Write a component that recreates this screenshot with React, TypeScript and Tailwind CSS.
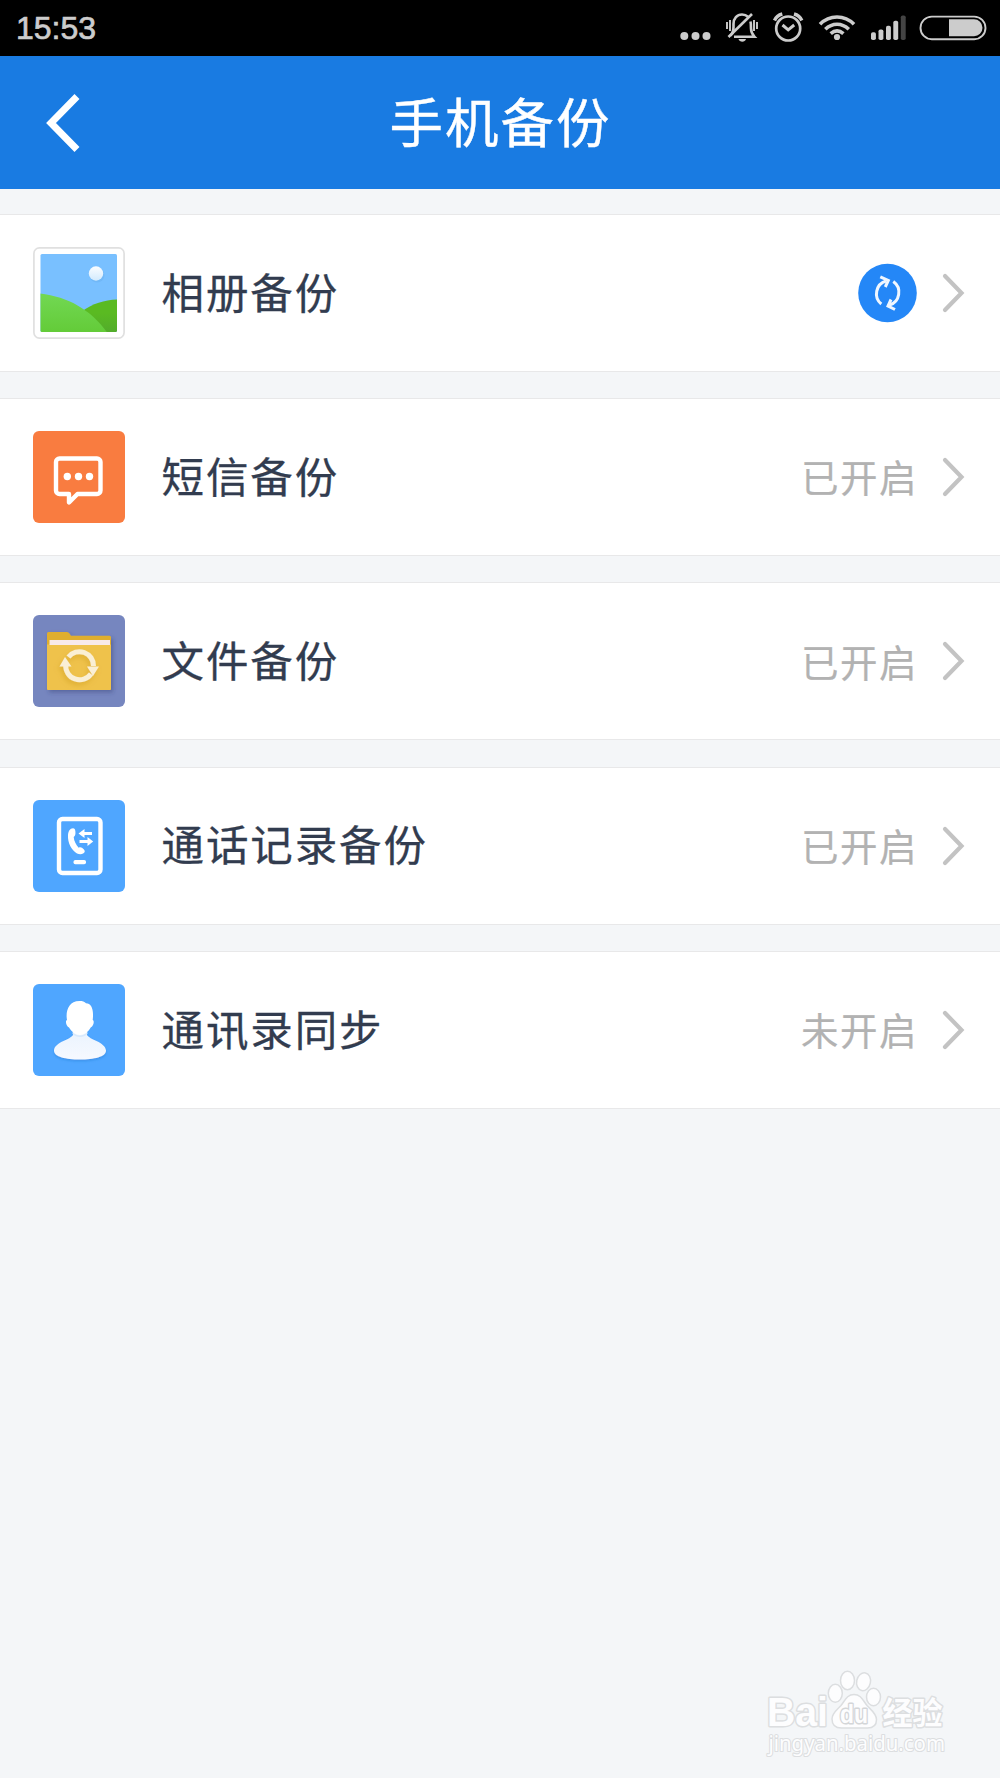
import React from 'react';

const StatusIcons = () => (
  <svg className="w-[320px] h-[56px]" viewBox="680 0 320 56" fill="none" stroke="#cccccc">
    {/* more */}
    <g fill="#cccccc" stroke="none">
      <circle cx="684.3" cy="36" r="4" />
      <circle cx="695.5" cy="36" r="4" />
      <circle cx="706.5" cy="36" r="4" />
    </g>

    {/* muted bell */}
    <g strokeWidth="2.600">
      <path d="M730.500 35.500c3-2.500 3-5 3-9v-2.500c0-5.500 3.500-9.500 8.500-9.500 2.500 0 4.500 .8 6 2.200" />
      <path d="M750.500 21.500c.5 2 .5 4 .5 7 0 3.500 1 5.500 3.500 8.300H734" />
      <path d="M728.500 37L752 14" />
      <path d="M730 20v11M727 22v7M754 20v11M757 22v7" strokeWidth="1.900" />
      <path d="M738.500 39h7.500c-.5 2-2 2.700-3.700 2.700s-3.300-.7-3.800-2.700z" fill="#cccccc" stroke="none" />
    </g>

    {/* alarm */}
    <g strokeWidth="2.700">
      <circle cx="788.200" cy="28.500" r="12" />
      <path d="M782.500 25l5.700 4.800 6-4.800" strokeWidth="3" />
      <path d="M774.500 20.500c1.500-3.500 4-5.500 7.800-6.500M801.800 20.500c-1.500-3.500-4-5.500-7.800-6.500" strokeWidth="3.400" />
    </g>

    {/* wifi */}
    <g strokeWidth="3.600">
      <path d="M820 24.300c9.500-9.700 24.500-9.700 34 0" />
      <path d="M825.300 29.300c7-6.700 16.500-6.700 23.500 0" />
      <path d="M830.700 33.700c4-3.600 8.700-3.600 12.700 0" />
      <circle cx="837" cy="37" r="3.100" fill="#cccccc" stroke="none" />
    </g>

    {/* signal */}
    <g fill="#cccccc" stroke="none">
      <rect x="871" y="32.300" width="4.900" height="7.700" rx="1.800" />
      <rect x="878.500" y="29.500" width="4.900" height="10.500" rx="1.800" />
      <rect x="886" y="25.700" width="4.900" height="14.300" rx="1.800" />
      <rect x="893.300" y="20.800" width="4.900" height="19.200" rx="1.800" />
      <rect x="900.800" y="15.500" width="4.900" height="24.500" rx="1.800" fill="#444444" />
    </g>

    {/* battery */}
    <rect x="920.500" y="16.600" width="65" height="22.600" rx="11.300" strokeWidth="1.900" />
    <path d="M949 19.300h25a8.500 8.500 0 0 1 0 17h-25z" fill="#cccccc" stroke="none" />
  </svg>
);

const AlbumIcon = () => (
  <svg className="w-[92px] h-[92px]" viewBox="0 0 92 92">
    <defs>
      <linearGradient id="hill" x1="0" y1="0" x2="0" y2="1">
        <stop offset="0" stopColor="#72d853" />
        <stop offset="1" stopColor="#63cb38" />
      </linearGradient>
      <linearGradient id="backHill" x1="0" y1="0" x2="0" y2="1">
        <stop offset="0.4" stopColor="#5aba22" />
        <stop offset="1" stopColor="#52ab2c" />
      </linearGradient>
      <linearGradient id="sun" x1="0" y1="0" x2="0" y2="1">
        <stop offset="0" stopColor="#fbfdff" />
        <stop offset="1" stopColor="#d2eafd" />
      </linearGradient>
      <clipPath id="photo">
        <rect x="7.500" y="7" width="76.500" height="78" rx="1.500" />
      </clipPath>
    </defs>
    <rect x="0.900" y="0.900" width="90.200" height="90.200" rx="5.500" fill="#fff" stroke="#e0e0e0" strokeWidth="1.700" />
    <g clipPath="url(#photo)">
      <rect x="7" y="6" width="78" height="80" fill="#79c0ff" />
      <circle cx="64" cy="28" r="7.500" fill="#6cb2f2" opacity="0.6" />
      <circle cx="63" cy="26.500" r="7.200" fill="url(#sun)" />
      <path d="M48 65C60 56 72 53 85 52.500V86H48z" fill="url(#backHill)" />
      <path d="M7 46.500C36 50 58 63 74.500 86H7z" fill="url(#hill)" />
    </g>
  </svg>
);

const SmsIcon = () => (
  <svg className="w-[92px] h-[92px]" viewBox="0 0 92 92">
    <rect width="92" height="92" rx="6" fill="#f97c40" />
    <path
      d="M26.500 27.500h37.500a3.500 3.500 0 0 1 3.500 3.500v28.500a3.500 3.500 0 0 1-3.500 3.500H44.500L36 71.500V63h-9.500a3.500 3.500 0 0 1-3.500-3.500V31a3.500 3.500 0 0 1 3.500-3.500z"
      fill="none"
      stroke="#fff"
      strokeWidth="4.400"
      strokeLinejoin="round"
    />
    <g fill="#fff">
      <circle cx="34.300" cy="45.500" r="3.700" />
      <circle cx="45.500" cy="45.500" r="3.700" />
      <circle cx="56.500" cy="45.500" r="3.700" />
    </g>
  </svg>
);

const FileIcon = () => (
  <svg className="w-[92px] h-[92px]" viewBox="0 0 92 92">
    <defs>
      <filter id="folderShadow" x="-20%" y="-20%" width="150%" height="150%">
        <feDropShadow dx="2" dy="2.500" stdDeviation="2" floodColor="#303a70" floodOpacity="0.4" />
      </filter>
      <filter id="arrowShadow" x="-20%" y="-20%" width="150%" height="150%">
        <feDropShadow dx="-1.500" dy="3" stdDeviation="2.500" floodColor="#b98410" floodOpacity="0.3" />
      </filter>
    </defs>
    <rect width="92" height="92" rx="6" fill="#7686bf" />
    <g filter="url(#folderShadow)">
      <path d="M14 18.500q0-1.500 1.500-1.500H34q1.500 0 2.500 1.500l1.500 2.300h38.500q1.500 0 1.500 1.500V73.500q0 1.500-1.500 1.500h-61q-1.500 0-1.500-1.500z" fill="#dfae2d" />
      <path d="M14 29.500h64V73.500q0 1.500-1.500 1.500h-61q-1.500 0-1.500-1.500z" fill="#efc24b" />
      <rect x="16.500" y="25" width="60.500" height="5" fill="#f8eaea" />
    </g>
    <g filter="url(#arrowShadow)" fill="none" stroke="#faefd5" strokeWidth="5">
      <path d="M35.500 42A14 14 0 0 1 60.500 51" />
      <path d="M58 59A14 14 0 0 1 32.700 50" />
      <path d="M54 51.500h12L60 61zM26.500 51.500h12L32 42z" fill="#faefd5" stroke="none" />
    </g>
  </svg>
);

const CallLogIcon = () => (
  <svg className="w-[92px] h-[92px]" viewBox="0 0 92 92">
    <rect width="92" height="92" rx="6" fill="#4fa6ff" />
    <rect x="26" y="19" width="41.500" height="54" rx="3.500" fill="none" stroke="#fff" strokeWidth="4.400" />
    <path
      d="M40 28.200c1.500 0 2.200 1.200 2.400 3.200.2 2.500 0 4.500-1.700 5.500.2 4 2.500 8 5 10.800 1.500-1 3.500-.3 5 1.500 1.700 1.800 1.200 3-.2 4-1.700 1.200-4 1.400-6.500.2C38.500 50 34.500 43 35 35c.2-3.800 2-6.800 5-6.800z"
      fill="#fff"
    />
    <path d="M50 33.500h9M46.500 41.500h9" stroke="#fff" strokeWidth="3" />
    <path d="M51.500 29v9L45.500 33.500zM54.500 37v9l5.700-4.500z" fill="#fff" />
    <rect x="40.500" y="60" width="12.500" height="4.200" rx="1.800" fill="#fff" />
  </svg>
);

const ContactIcon = () => (
  <svg className="w-[92px] h-[92px]" viewBox="0 0 92 92">
    <defs>
      <linearGradient id="body" x1="0" y1="0" x2="0" y2="1">
        <stop offset="0" stopColor="#eaf3fe" />
        <stop offset="1" stopColor="#f6f9ff" />
      </linearGradient>
      <filter id="bodyShadow" x="-20%" y="-20%" width="140%" height="150%">
        <feDropShadow dx="0" dy="1.500" stdDeviation="1.200" floodColor="#1c6cc0" floodOpacity="0.35" />
      </filter>
    </defs>
    <rect width="92" height="92" rx="6" fill="#4fa6ff" />
    <path
      d="M40 47v4c-2 4.500-18.500 7-19 15.500C21 73 33 75.500 47 75.500S73 73 73 66.500C72.500 58 56 55.500 54 51v-4z"
      fill="url(#body)"
      filter="url(#bodyShadow)"
    />
    <path d="M39.500 48c4 4.500 10.500 4.500 15 0v2c-4 4-11 4-15 0z" fill="#d8e9fc" />
    <path
      d="M34 36c-1.500-8 1-19 12.500-19 3 0 5 .6 6.500 2.300 5.500 0 8 6.200 6.700 16.700 1.800.2 1.300 6-2 7.500C55.500 48 51 51 47 51s-8.500-3-11-7.500c-3.300-1.500-3.800-7.300-2-7.500z"
      fill="#fff"
    />
  </svg>
);

const SyncBadge = () => (
  <svg className="w-[60px] h-[60px]" viewBox="0 0 60 60" fill="none" stroke="#f0f7ff" strokeWidth="3">
    <circle cx="29.500" cy="30" r="29.300" fill="#2487f7" stroke="none" />
    <path d="M23.300 41A13.300 13.300 0 0 1 28 18" />
    <path d="M35.300 18.500A13.300 13.300 0 0 1 31.500 42" />
    <path d="M22.300 13.800l8 3.700-3 6.500" />
    <path d="M33 36.500l-3 6.500 7 3.500" />
  </svg>
);

const Chevron = () => (
  <svg className="w-[24px] h-[40px]" viewBox="0 0 24 40" fill="none">
    <path d="M3 3l16.500 17L3 37" stroke="#c3c3c3" strokeWidth="4.200" strokeLinecap="round" />
  </svg>
);

const Watermark = () => (
  <svg className="w-[190px] h-[90px]" viewBox="764 1668 190 90" fill="#fdfdfe" stroke="#dcdee0" strokeWidth="1.500">
    <ellipse cx="835.300" cy="1693.300" rx="7" ry="9" />
    <ellipse cx="847.500" cy="1680.500" rx="7" ry="9.200" />
    <ellipse cx="863.500" cy="1681.700" rx="6.900" ry="9" transform="rotate(12 863.500 1682)" />
    <ellipse cx="873.500" cy="1697" rx="7" ry="8.700" />
    <path d="M854 1694.500c7 0 9 6 13 11 4 4.500 9.500 8 9.500 14 0 6-4 8.500-9 8.500h-26c-6 0-9.500-3-9.500-9 0-6 5-9 9-13.500 4-5 6-11 13-11z" />
    <g paintOrder="stroke" strokeWidth="3" strokeLinejoin="round">
      <text x="767" y="1726" fontFamily="Liberation Sans" fontWeight="700" fontSize="40" textLength="61" lengthAdjust="spacingAndGlyphs">Bai</text>
      <text x="840" y="1723" fontFamily="Liberation Sans" fontWeight="700" fontSize="26" textLength="28" lengthAdjust="spacingAndGlyphs" stroke="#d4d6d8">du</text>
      <text x="882.500" y="1724" fontFamily="Noto Sans CJK SC, sans-serif" fontWeight="700" fontSize="31" textLength="60" lengthAdjust="spacingAndGlyphs">经验</text>
      <text x="768.500" y="1751" fontFamily="Noto Sans" fontSize="21" strokeWidth="2.200" textLength="176.500" lengthAdjust="spacingAndGlyphs">jingyan.baidu.com</text>
    </g>
  </svg>
);

const items = [
  { title: '相册备份', icon: <AlbumIcon />, status: null },
  { title: '短信备份', icon: <SmsIcon />, status: '已开启' },
  { title: '文件备份', icon: <FileIcon />, status: '已开启' },
  { title: '通话记录备份', icon: <CallLogIcon />, status: '已开启' },
  { title: '通讯录同步', icon: <ContactIcon />, status: '未开启' },
];

const App = () => {
  return (
    <div className="w-[1000px] h-[1778px] flex flex-col bg-[#f4f6f8] overflow-hidden font-['Noto_Sans_CJK_SC',sans-serif]">
      <div className="h-[55.500px] shrink-0 bg-black flex justify-between pl-4">
        <span className="font-['Liberation_Sans',sans-serif] text-[32px] leading-[57px] text-[#cccccc] [-webkit-text-stroke:0.7px_#cccccc]">15:53</span>
        <StatusIcons />
      </div>

      <header className="h-[133px] shrink-0 bg-[#197be2] grid grid-cols-[120px_1fr_120px] items-center">
        <svg className="w-[36px] h-[60px] ml-[45px]" viewBox="0 0 36 60" fill="none">
          <path d="M32 4.500L6 31 32 57.500" stroke="#fff" strokeWidth="7" />
        </svg>
        <h1 className="pb-1 pl-px text-center text-[53.500px] tracking-[2px] leading-none text-white [-webkit-text-stroke:0.4px_white]">手机备份</h1>
      </header>

      <main className="flex flex-col gap-[26.200px] pt-[25.500px]">
        {items.map((item) => (
          <div key={item.title} className="h-[158px] bg-white border-y border-[#e8e8e9] flex items-center pl-[33px] pr-[34px]">
            {item.icon}
            <span className="ml-[36.500px] pb-[4px] text-[42.500px] tracking-[1.900px] leading-none text-[#323c4f] [-webkit-text-stroke:0.3px_#323c4f]">{item.title}</span>
            <div className="ml-auto flex items-center gap-[24px]">
              {item.status ? (
                <span className="pb-[2px] text-[37.500px] tracking-[1.500px] leading-none text-[#b2b2b2] [-webkit-text-stroke:0.200px_#b2b2b2]">{item.status}</span>
              ) : (
                <SyncBadge />
              )}
              <Chevron />
            </div>
          </div>
        ))}
      </main>

      <footer className="mt-auto mb-5 flex justify-end pr-[46px]">
        <Watermark />
      </footer>
    </div>
  );
};

export default App;
